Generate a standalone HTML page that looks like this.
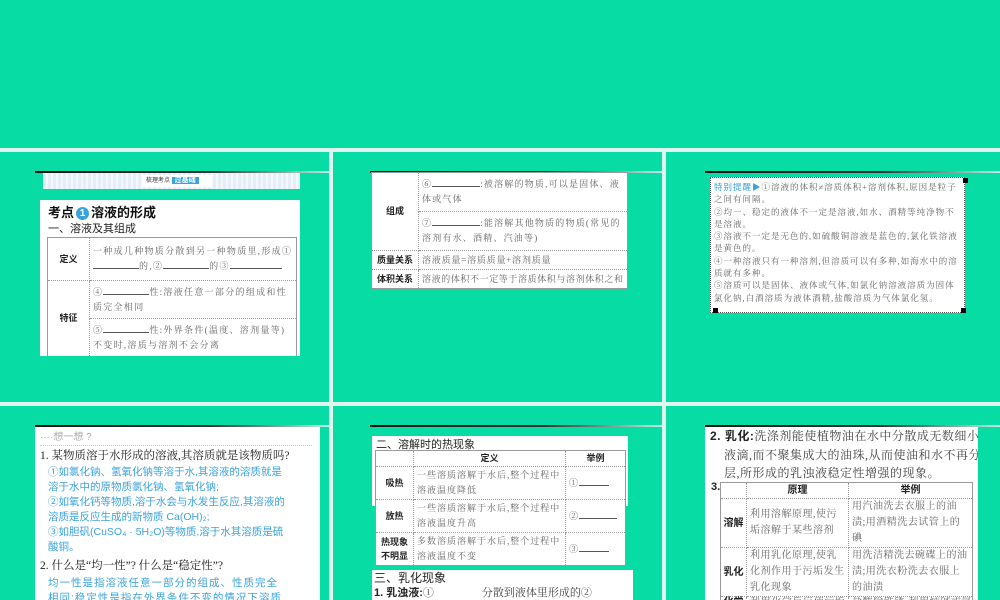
<!DOCTYPE html>
<html><head><meta charset="utf-8"><style>
*{margin:0;padding:0;box-sizing:border-box}
html,body{width:1000px;height:600px;overflow:hidden}
body{background:#06dca4;position:relative;font-family:"Liberation Serif","Noto Serif CJK SC",serif;color:#444}
#root{position:absolute;left:0;top:0;width:1000px;height:600px;overflow:hidden}
.a{position:absolute}
.ln{position:absolute;background:#dff5ee}
.dk{position:absolute;height:2px;background:linear-gradient(90deg,#111,#333 60%,#bfeee0)}
.w{position:absolute;background:#fff}
.s{font-family:"Liberation Sans","Noto Sans CJK SC",sans-serif}
table{border-collapse:collapse;position:absolute;background:#fff;table-layout:fixed}
td{border:1px dotted #999;font-size:9px;line-height:15px;color:#666;padding:0 3px;vertical-align:middle;letter-spacing:.6px}
td.h{font-weight:bold;color:#222;text-align:center;font-family:"Liberation Sans","Noto Sans CJK SC",sans-serif;white-space:nowrap;padding:0;letter-spacing:0}
.u{display:inline-block;border-bottom:1px solid #555;color:#999}
.bl{color:#3ba3dc;font-family:"Liberation Sans","Noto Sans CJK SC",sans-serif}
.clip{position:absolute;overflow:hidden}
</style></head><body><div id="root">
<div class="ln" style="left:0;top:148px;width:1000px;height:4px"></div>
<div class="ln" style="left:0;top:402px;width:1000px;height:4px"></div>
<div class="ln" style="left:329px;top:148px;width:4px;height:452px"></div>
<div class="ln" style="left:662px;top:148px;width:4px;height:452px"></div>

<!-- panel 1 -->
<div class="dk" style="left:35px;top:171px;width:294px"></div>
<div class="w" style="left:43px;top:173px;width:257px;height:16px;background:repeating-linear-gradient(90deg,#e4eef7 0 3px,#f4f8fc 3px 5px)"></div>
<div class="a s" style="left:142px;top:175px;width:70px;height:12px;background:#fff;font-size:6px;color:#333;line-height:12px;padding-left:4px">梳理考点 <span style="background:#3ba3dc;color:#fff;font-weight:bold;padding:0 3px;font-size:7px">过基础</span></div>
<div class="w" style="left:40px;top:200px;width:260px;height:156px"></div>
<div class="a s" style="left:48px;top:202px;font-size:13px;font-weight:bold;color:#111">考点<span style="display:inline-block;width:13px;height:13px;border-radius:50%;background:#3ba3dc;color:#fff;font-size:10px;text-align:center;line-height:13px;margin:0 2px;vertical-align:1px">1</span>溶液的形成</div>
<div class="a s" style="left:48px;top:220px;font-size:11px;color:#222">一、溶液及其组成</div>
<div class="clip" style="left:47px;top:237px;width:251px;height:119px">
<table style="left:0;top:0;width:250px;border:1px solid #999">
<col style="width:42px"><col>
<tr style="height:43px"><td class="h">定义</td><td style="letter-spacing:1.3px">一种成几种物质分散到另一种物质里,形成①<span class="u" style="width:46px"></span>的,②<span class="u" style="width:46px"></span>的③<span class="u" style="width:52px"></span></td></tr>
<tr style="height:38px"><td class="h" rowspan="2">特征</td><td style="letter-spacing:1.3px">④<span class="u" style="width:46px"></span>性:溶液任意一部分的组成和性质完全相同</td></tr>
<tr style="height:38px"><td style="letter-spacing:1.3px">⑤<span class="u" style="width:46px"></span>性:外界条件(温度、溶剂量等)不变时,溶质与溶剂不会分离</td></tr>
</table></div>

<!-- panel 2 -->
<div class="dk" style="left:370px;top:171px;width:292px"></div>
<table style="left:371px;top:172px;width:257px;border:1px solid #999">
<col style="width:47px"><col>
<tr style="height:39px"><td class="h" rowspan="2">组成</td><td style="letter-spacing:1.2px">⑥<span class="u" style="width:48px"></span>:被溶解的物质,可以是固体、液体或气体</td></tr>
<tr style="height:39px"><td style="letter-spacing:1.2px">⑦<span class="u" style="width:48px"></span>:能溶解其他物质的物质(常见的溶剂有水、酒精、汽油等)</td></tr>
<tr style="height:19px"><td class="h">质量关系</td><td style="letter-spacing:.8px">溶液质量=溶质质量+溶剂质量</td></tr>
<tr style="height:19px"><td class="h">体积关系</td><td style="white-space:nowrap;letter-spacing:.6px">溶液的体积不一定等于溶质体积与溶剂体积之和</td></tr>
</table>

<!-- panel 3 -->
<div class="dk" style="left:705px;top:171px;width:295px"></div>
<div class="w" style="left:710px;top:177px;width:255px;height:136px;border:1px dotted #555"></div>
<div class="a" style="left:714px;top:181px;width:248px;font-size:8.5px;line-height:12.3px;color:#666;letter-spacing:1px"><span class="bl">特别提醒▶</span>①溶液的体积≠溶质体积+溶剂体积,原因是粒子之间有间隔。<br>②均一、稳定的液体不一定是溶液,如水、酒精等纯净物不是溶液。<br>③溶液不一定是无色的,如硫酸铜溶液是蓝色的,氯化铁溶液是黄色的。<br>④一种溶液只有一种溶剂,但溶质可以有多种,如海水中的溶质就有多种。<br>⑤溶质可以是固体、液体或气体,如氯化钠溶液溶质为固体氯化钠,白酒溶质为液体酒精,盐酸溶质为气体氯化氢。</div>
<div class="a" style="left:963px;top:178px;width:5px;height:5px;background:#000"></div>
<div class="a" style="left:713px;top:308px;width:5px;height:5px;background:#000"></div>
<div class="a" style="left:961px;top:308px;width:5px;height:5px;background:#000"></div>

<!-- panel 4 -->
<div class="dk" style="left:35px;top:425px;width:294px"></div>
<div class="clip" style="left:35px;top:427px;width:285px;height:173px;background:#fff">
<div class="a s" style="left:5px;top:4px;width:272px;font-size:10px;color:#aaa;border-bottom:1px dotted #ccc;line-height:14px">····想一想 ?</div>
<div class="a" style="left:5px;top:20px;font-size:11.5px;color:#222;white-space:nowrap">1. 某物质溶于水形成的溶液,其溶质就是该物质吗?</div>
<div class="a bl" style="left:13px;top:38px;width:240px;font-size:10.5px;line-height:15px">①如氯化钠、氢氧化钠等溶于水,其溶液的溶质就是溶于水中的原物质氯化钠、氢氧化钠;<br>②如氧化钙等物质,溶于水会与水发生反应,其溶液的溶质是反应生成的新物质 Ca(OH)₂;<br>③如胆矾(CuSO₄ · 5H₂O)等物质,溶于水其溶质是硫酸铜。</div>
<div class="a" style="left:5px;top:130px;font-size:11.5px;color:#222">2. 什么是“均一性”? 什么是“稳定性”?</div>
<div class="a bl" style="left:13px;top:149px;width:240px;height:24px;overflow:hidden;font-size:10.5px;line-height:15px;letter-spacing:1px">均一性是指溶液任意一部分的组成、性质完全相同;稳定性是指在外界条件不变的情况下溶质不析</div>
</div>

<!-- panel 5 -->
<div class="dk" style="left:370px;top:425px;width:292px"></div>
<div class="w" style="left:372px;top:436px;width:256px;height:70px"></div>
<div class="a s" style="left:376px;top:436px;font-size:11px;color:#222">二、溶解时的热现象</div>
<table style="left:375px;top:450px;width:251px;border:1px solid #999">
<col style="width:38px"><col><col style="width:60px">
<tr style="height:15px"><td class="h"></td><td class="h">定义</td><td class="h">举例</td></tr>
<tr style="height:33px"><td class="h">吸热</td><td style="letter-spacing:1px">一些溶质溶解于水后,整个过程中溶液温度降低</td><td>①<span class="u" style="width:30px"></span></td></tr>
<tr style="height:33px"><td class="h">放热</td><td style="letter-spacing:1px">一些溶质溶解于水后,整个过程中溶液温度升高</td><td>②<span class="u" style="width:38px"></span></td></tr>
<tr style="height:33px"><td class="h" style="white-space:normal;line-height:14px">热现象<br>不明显</td><td style="letter-spacing:1px">多数溶质溶解于水后,整个过程中溶液温度不变</td><td>③<span class="u" style="width:30px"></span></td></tr>
</table>
<div class="clip" style="left:372px;top:570px;width:261px;height:30px;background:#fff">
<div class="a s" style="left:2px;top:0;font-size:12px;line-height:16px;color:#222">三、乳化现象</div>
<div class="a" style="left:2px;top:17px;height:13px;overflow:hidden;font-size:11px;line-height:13px;color:#444;white-space:nowrap"><b class="s" style="color:#222">1. 乳浊液:</b>①<span style="display:inline-block;width:48px"></span>分散到液体里形成的②</div>
</div>

<!-- panel 6 -->
<div class="dk" style="left:705px;top:425px;width:295px"></div>
<div class="clip" style="left:705px;top:427px;width:273px;height:173px;background:#fff">
<div class="a" style="left:5px;top:0;font-size:12px;line-height:18.5px;color:#444;letter-spacing:.5px;white-space:nowrap"><b class="s" style="color:#222">2. 乳化:</b>洗涤剂能使植物油在水中分散成无数细小的<br>&nbsp;&nbsp;&nbsp;&nbsp;液滴,而不聚集成大的油珠,从而使油和水不再分<br>&nbsp;&nbsp;&nbsp;&nbsp;层,所形成的乳浊液稳定性增强的现象。</div>
<div class="a s" style="left:6px;top:54px;font-size:11px;font-weight:bold;color:#222">3.</div>
<table style="left:15px;top:55px;width:253px;border:1px solid #999">
<col style="width:26px"><col style="width:102px"><col>
<tr style="height:16px"><td class="h">&nbsp;</td><td class="h" style="font-size:10px">原理</td><td class="h" style="font-size:10px">举例</td></tr>
<tr style="height:43px"><td class="h" style="font-size:10px">溶解</td><td style="font-size:10px;line-height:16px;letter-spacing:.5px">利用溶解原理,使污垢溶解于某些溶剂</td><td style="font-size:10px;line-height:16px;letter-spacing:.5px">用汽油洗去衣服上的油渍;用酒精洗去试管上的碘</td></tr>
<tr style="height:46px"><td class="h" style="font-size:10px">乳化</td><td style="font-size:10px;line-height:16px;letter-spacing:.5px">利用乳化原理,使乳化剂作用于污垢发生乳化现象</td><td style="font-size:10px;line-height:16px;letter-spacing:.5px">用洗洁精洗去碗碟上的油渍;用洗衣粉洗去衣服上的油渍</td></tr>
<tr style="height:12px"><td class="h" style="font-size:10px;line-height:12px">化学</td><td style="font-size:10px;line-height:12px;white-space:nowrap;overflow:hidden">利用化学反应使污垢</td><td style="font-size:10px;line-height:12px;white-space:nowrap;overflow:hidden">盐酸除铁锈;利用纯碱或氢</td></tr>
</table></div>
</div></body></html>
